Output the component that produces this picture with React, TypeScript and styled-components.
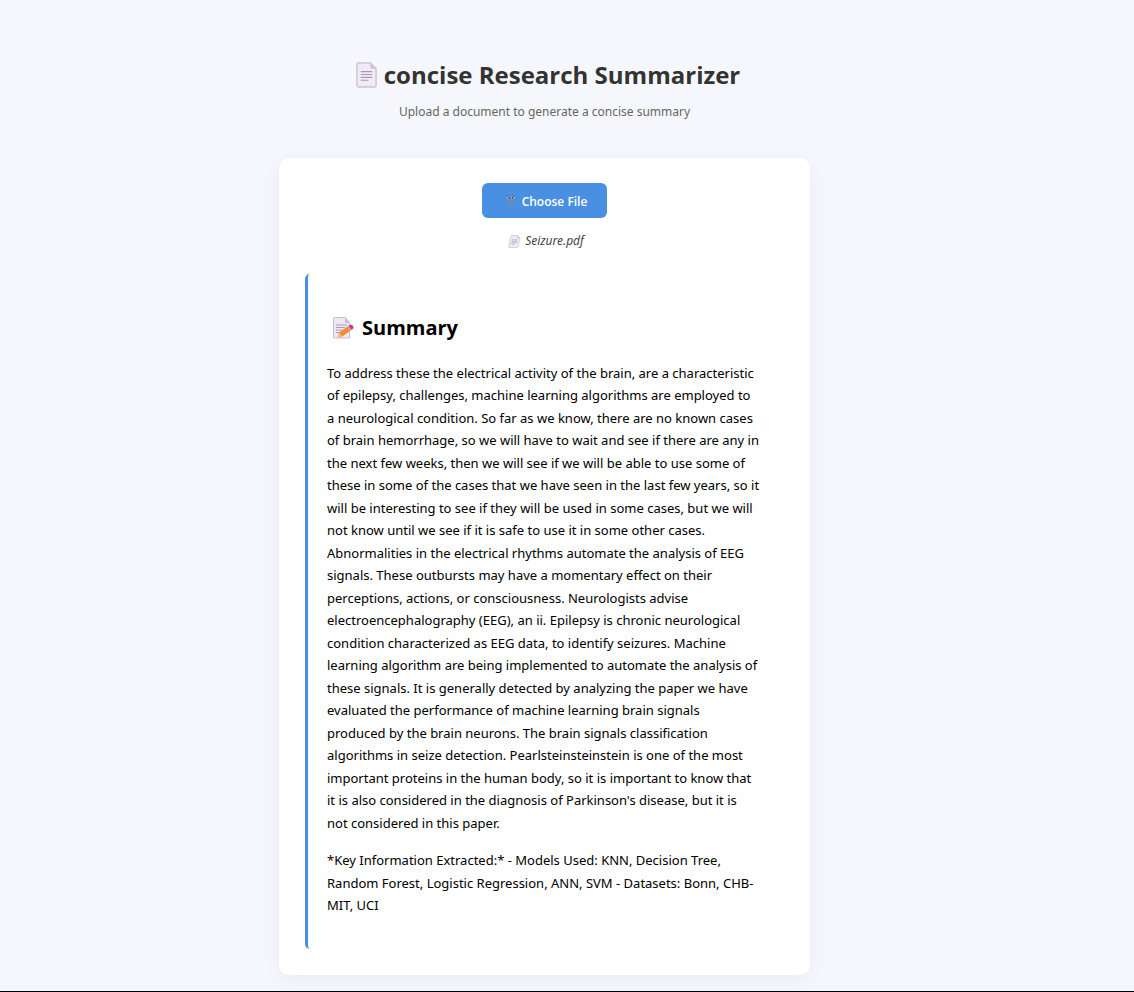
import React, { useId } from "react";
import styled, { createGlobalStyle } from "styled-components";

const GlobalStyle = createGlobalStyle`
  * { box-sizing: border-box; }
  body {
    margin: 0;
    background: #f5f7fc;
    font-family: "Segoe UI", "Noto Sans", "Open Sans", sans-serif;
  }
`;

const Page = styled.div`
  min-height: 100vh;
  padding: 56px 45px 16px 0;
  border-bottom: 1px solid #000;
  display: flex;
  flex-direction: column;
  align-items: center;
`;

const Header = styled.header`
  display: flex;
  flex-direction: column;
  align-items: center;
  gap: 8px;
  margin-bottom: 36px;
`;

const Title = styled.h1`
  display: flex;
  align-items: center;
  gap: 7px;
  margin: 0;
  padding-left: 7px;
  color: #333;
  font-family: "Segoe UI", "Open Sans", sans-serif;
  font-size: 24px;
  line-height: 38px;
`;

const Subtitle = styled.p`
  margin: 0;
  color: #666;
  font-size: 12px;
  line-height: 20px;
`;

const Card = styled.main`
  width: 100%;
  max-width: 531px;
  padding: 25px 26px 26px;
  display: flex;
  flex-direction: column;
  align-items: center;
  background: #fff;
  border-radius: 10px;
  box-shadow: 0 4px 20px rgba(0, 0, 0, 0.05);
`;

const ChooseButton = styled.button`
  display: flex;
  align-items: center;
  justify-content: center;
  gap: 6px;
  width: 125px;
  height: 35px;
  padding: 2px 0 0 4px;
  border: 0;
  border-radius: 6px;
  background: #4a90e2;
  color: #fff;
  font: 600 12px/20px "Segoe UI", "Open Sans", "Noto Sans", sans-serif;
  cursor: pointer;
`;

const FileName = styled.p`
  display: flex;
  align-items: center;
  gap: 5px;
  margin: 13px 0 23px;
  padding-left: 4px;
  color: #444;
  font-size: 12px;
  font-style: italic;
  line-height: 20px;
`;

const Summary = styled.section`
  width: 100%;
  padding: 38px 16px 32px 19px;
  background: #fefefe;
  border-left: 3px solid #4a90e2;
  border-radius: 5px;
`;

const SummaryTitle = styled.h2`
  display: flex;
  align-items: center;
  gap: 8px;
  margin: 0 0 18px;
  padding-left: 6px;
  color: #000;
  font-family: "Segoe UI", "Open Sans", sans-serif;
  font-size: 20px;
  line-height: 32px;
`;

const Paragraph = styled.p`
  margin: 0 0 15px;
  color: #000;
  font-size: 13px;
  line-height: 1.73;
  white-space: pre-line;

  &:last-child { margin-bottom: 0; }
`;

const SlantedIcon = styled.svg`
  transform: skewX(-12deg);
`;

function PageShape() {
  return (
    <>
      <path d="M2 1h13l6 6v17.500q0 1.500-1.500 1.500h-17Q1 26 1 24.500V2.500Q1 1 2 1Z" fill="#f1ebf5" stroke="#cdc3d4" strokeWidth="1.500" />
      <path d="M15 1v4.500Q15 7 16.500 7H21Z" fill="#cdc2d6" />
      <path d="M5 10h12M5 13h12M5 16h12M5 19h8" stroke="#a799b3" strokeWidth="1.200" fill="none" />
    </>
  );
}

function DocumentIcon() {
  return (
    <svg width="21" height="26" viewBox="0 0 22 27" aria-hidden="true"><PageShape /></svg>
  );
}

function SmallDocumentIcon() {
  return (
    <SlantedIcon width="11" height="13" viewBox="0 0 22 27" aria-hidden="true"><PageShape /></SlantedIcon>
  );
}

function MemoIcon() {
  return (
    <svg width="21" height="22" viewBox="0 0 21 22" aria-hidden="true">
      <path d="M1.500 .5h11l4 5v15.500h-15q-1 0-1-1v-18.500q0-1 1-1Z" fill="#eee8f2" stroke="#c8becf" />
      <path d="M12 1v4q0 1 1 1h4Z" fill="#c9bed1" />
      <path d="M3 8h11M3 10.500h9M3 13h6M3 15.500h3" stroke="#ab9db5" />
      <path d="M6 15.500 14.500 9.500l3 4.200-8.500 6-4.500 1Z" fill="#f98a35" />
      <path d="m6 15.500 3 4.200-4.500 1Z" fill="#f4c09b" />
      <path d="m14 9.900 1.500-1.100 3 4.200-1.500 1.100Z" fill="#b6a8bd" />
      <path d="m15.500 8.800 1.200-.8q2-.8 3.300.9 1.100 1.900-.4 3.200l-1.100.8Z" fill="#dc3c62" />
    </svg>
  );
}

function ClipIcon() {
  return (
    <svg width="10" height="13" viewBox="0 0 10 13" aria-hidden="true">
      <path d="M2 4v4.500q0 3 2.500 3T7 8.500V3M3.800 4v4q0 1.300 1 1.300t1-1.300V4" fill="none" stroke="#7f8a9c" strokeWidth="1" />
      <ellipse cx="2.800" cy="2.800" rx="1.700" ry="1.500" fill="#b9c3d2" />
      <ellipse cx="6.800" cy="2.800" rx="1.700" ry="1.500" fill="#b9c3d2" />
      <circle cx="3.200" cy="2.900" r=".9" fill="#243145" />
      <circle cx="6.500" cy="2.900" r=".9" fill="#243145" />
      <path d="m1 1.300 2-.8M6 .5l2.500 1" stroke="#46536a" strokeWidth=".8" />
    </svg>
  );
}

const summaryText = `To address these the electrical activity of the brain, are a characteristic
of epilepsy, challenges, machine learning algorithms are employed to
a neurological condition. So far as we know, there are no known cases
of brain hemorrhage, so we will have to wait and see if there are any in
the next few weeks, then we will see if we will be able to use some of
these in some of the cases that we have seen in the last few years, so it
will be interesting to see if they will be used in some cases, but we will
not know until we see if it is safe to use it in some other cases.
Abnormalities in the electrical rhythms automate the analysis of EEG
signals. These outbursts may have a momentary effect on their
perceptions, actions, or consciousness. Neurologists advise
electroencephalography (EEG), an ii. Epilepsy is chronic neurological
condition characterized as EEG data, to identify seizures. Machine
learning algorithm are being implemented to automate the analysis of
these signals. It is generally detected by analyzing the paper we have
evaluated the performance of machine learning brain signals
produced by the brain neurons. The brain signals classification
algorithms in seize detection. Pearlsteinsteinstein is one of the most
important proteins in the human body, so it is important to know that
it is also considered in the diagnosis of Parkinson's disease, but it is
not considered in this paper.`;

const keyInformation = `*Key Information Extracted:* - Models Used: KNN, Decision Tree,
Random Forest, Logistic Regression, ANN, SVM - Datasets: Bonn, CHB-
MIT, UCI`;

export default function App() {
  const headingId = useId();
  return (
    <>
      <GlobalStyle />
      <Page>
        <Header>
          <Title><DocumentIcon />concise Research Summarizer</Title>
          <Subtitle>Upload a document to generate a concise summary</Subtitle>
        </Header>
        <Card>
          <ChooseButton type="button"><ClipIcon />Choose File</ChooseButton>
          <FileName><SmallDocumentIcon />Seizure.pdf</FileName>
          <Summary aria-labelledby={headingId}>
            <SummaryTitle id={headingId}><MemoIcon />Summary</SummaryTitle>
            <Paragraph>{summaryText}</Paragraph>
            <Paragraph>{keyInformation}</Paragraph>
          </Summary>
        </Card>
      </Page>
    </>
  );
}
